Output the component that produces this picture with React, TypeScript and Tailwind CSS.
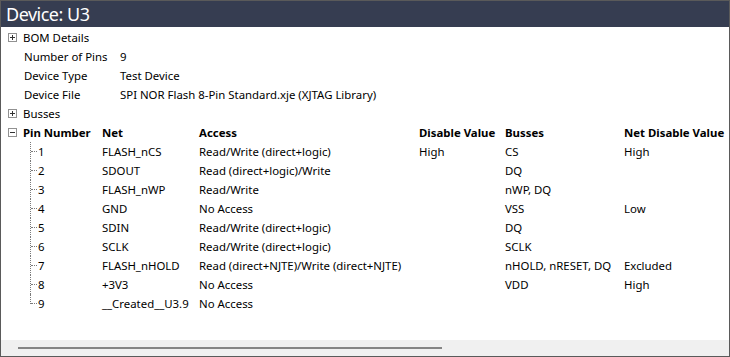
import React from "react";

type Pin = {
    num: string;
    net: string;
    access: string;
    disable?: string;
    busses?: string;
    netDisable?: string;
};

const pins: Pin[] = [
    { num: "1", net: "FLASH_nCS", access: "Read/Write (direct+logic)", disable: "High", busses: "CS", netDisable: "High" },
    { num: "2", net: "SDOUT", access: "Read (direct+logic)/Write", busses: "DQ" },
    { num: "3", net: "FLASH_nWP", access: "Read/Write", busses: "nWP, DQ" },
    { num: "4", net: "GND", access: "No Access", busses: "VSS", netDisable: "Low" },
    { num: "5", net: "SDIN", access: "Read/Write (direct+logic)", busses: "DQ" },
    { num: "6", net: "SCLK", access: "Read/Write (direct+logic)", busses: "SCLK" },
    { num: "7", net: "FLASH_nHOLD", access: "Read (direct+NJTE)/Write (direct+NJTE)", busses: "nHOLD, nRESET, DQ", netDisable: "Excluded" },
    { num: "8", net: "+3V3", access: "No Access", busses: "VDD", netDisable: "High" },
    { num: "9", net: "__Created__U3.9", access: "No Access" },
];

const Expander = ({ open }: { open: boolean }) => (
    <span className="relative w-[9px] h-[9px] border border-[#919191] bg-white shrink-0">
        <span className="absolute left-[1px] top-[3px] w-[5px] h-px bg-[#333]" />
        {!open && <span className="absolute left-[3px] top-[1px] w-px h-[5px] bg-[#333]" />}
    </span>
);

const PropRow = ({ label, value }: { label: string; value: string }) => (
    <div className="flex items-center h-[19px]">
        <span className="w-[96px] ml-[23px] shrink-0">{label}</span>
        <span className="whitespace-nowrap">{value}</span>
    </div>
);

export default function App() {
    return (
        <div
            className="w-[730px] h-[357px] flex flex-col border border-[#5a5a5a] bg-white text-[11.4px] text-black overflow-hidden"
            style={{ fontFamily: '"Noto Sans", "Open Sans", sans-serif' }}
        >
            <div className="h-[26px] bg-[#363d51] text-white text-[18px] tracking-[-0.5px] leading-[26px] pl-[5px] shrink-0">
                Device: U3
            </div>
            <div className="flex-1 flex flex-col pt-[1px]">
                <div className="flex items-center h-[19px] pl-[7px] gap-[6px]">
                    <Expander open={false} />
                    <span>BOM Details</span>
                </div>
                <PropRow label="Number of Pins" value="9" />
                <PropRow label="Device Type" value="Test Device" />
                <PropRow label="Device File" value="SPI NOR Flash 8-Pin Standard.xje (XJTAG Library)" />
                <div className="flex items-center h-[19px] pl-[7px] gap-[6px]">
                    <Expander open={false} />
                    <span>Busses</span>
                </div>
                <div className="flex items-center h-[19px] font-bold">
                    <span className="w-[101px] pl-[7px] flex items-center gap-[6px] shrink-0">
                        <Expander open={true} />
                        <span>Pin Number</span>
                    </span>
                    <span className="w-[97px] shrink-0">Net</span>
                    <span className="w-[220px] shrink-0">Access</span>
                    <span className="w-[86px] shrink-0">Disable Value</span>
                    <span className="w-[119px] shrink-0">Busses</span>
                    <span className="whitespace-nowrap">Net Disable Value</span>
                </div>
                {pins.map((p, i) => (
                    <div key={p.num} className="flex items-center h-[19px]">
                        <span className="w-[101px] h-full relative shrink-0">
                            <span
                                className={`absolute left-[29px] top-0 w-0 border-l border-dotted border-[#7a7a7a] ${
                                    i === pins.length - 1 ? "h-[10px]" : "h-full"
                                }`}
                            />
                            <span className="absolute left-[30px] top-[9px] w-[6px] border-t border-dotted border-[#7a7a7a]" />
                            <span className="absolute left-[37px] top-0 leading-[19px]">{p.num}</span>
                        </span>
                        <span className="w-[97px] shrink-0 whitespace-nowrap">{p.net}</span>
                        <span className="w-[220px] shrink-0 whitespace-nowrap">{p.access}</span>
                        <span className="w-[86px] shrink-0">{p.disable}</span>
                        <span className="w-[119px] shrink-0 whitespace-nowrap">{p.busses}</span>
                        <span>{p.netDisable}</span>
                    </div>
                ))}
            </div>
            <div className="h-[16px] bg-[#f0f0f0] shrink-0 flex items-center pl-[17px]">
                <div className="w-[424px] h-[2px] bg-[#858585]" />
            </div>
        </div>
    );
}
